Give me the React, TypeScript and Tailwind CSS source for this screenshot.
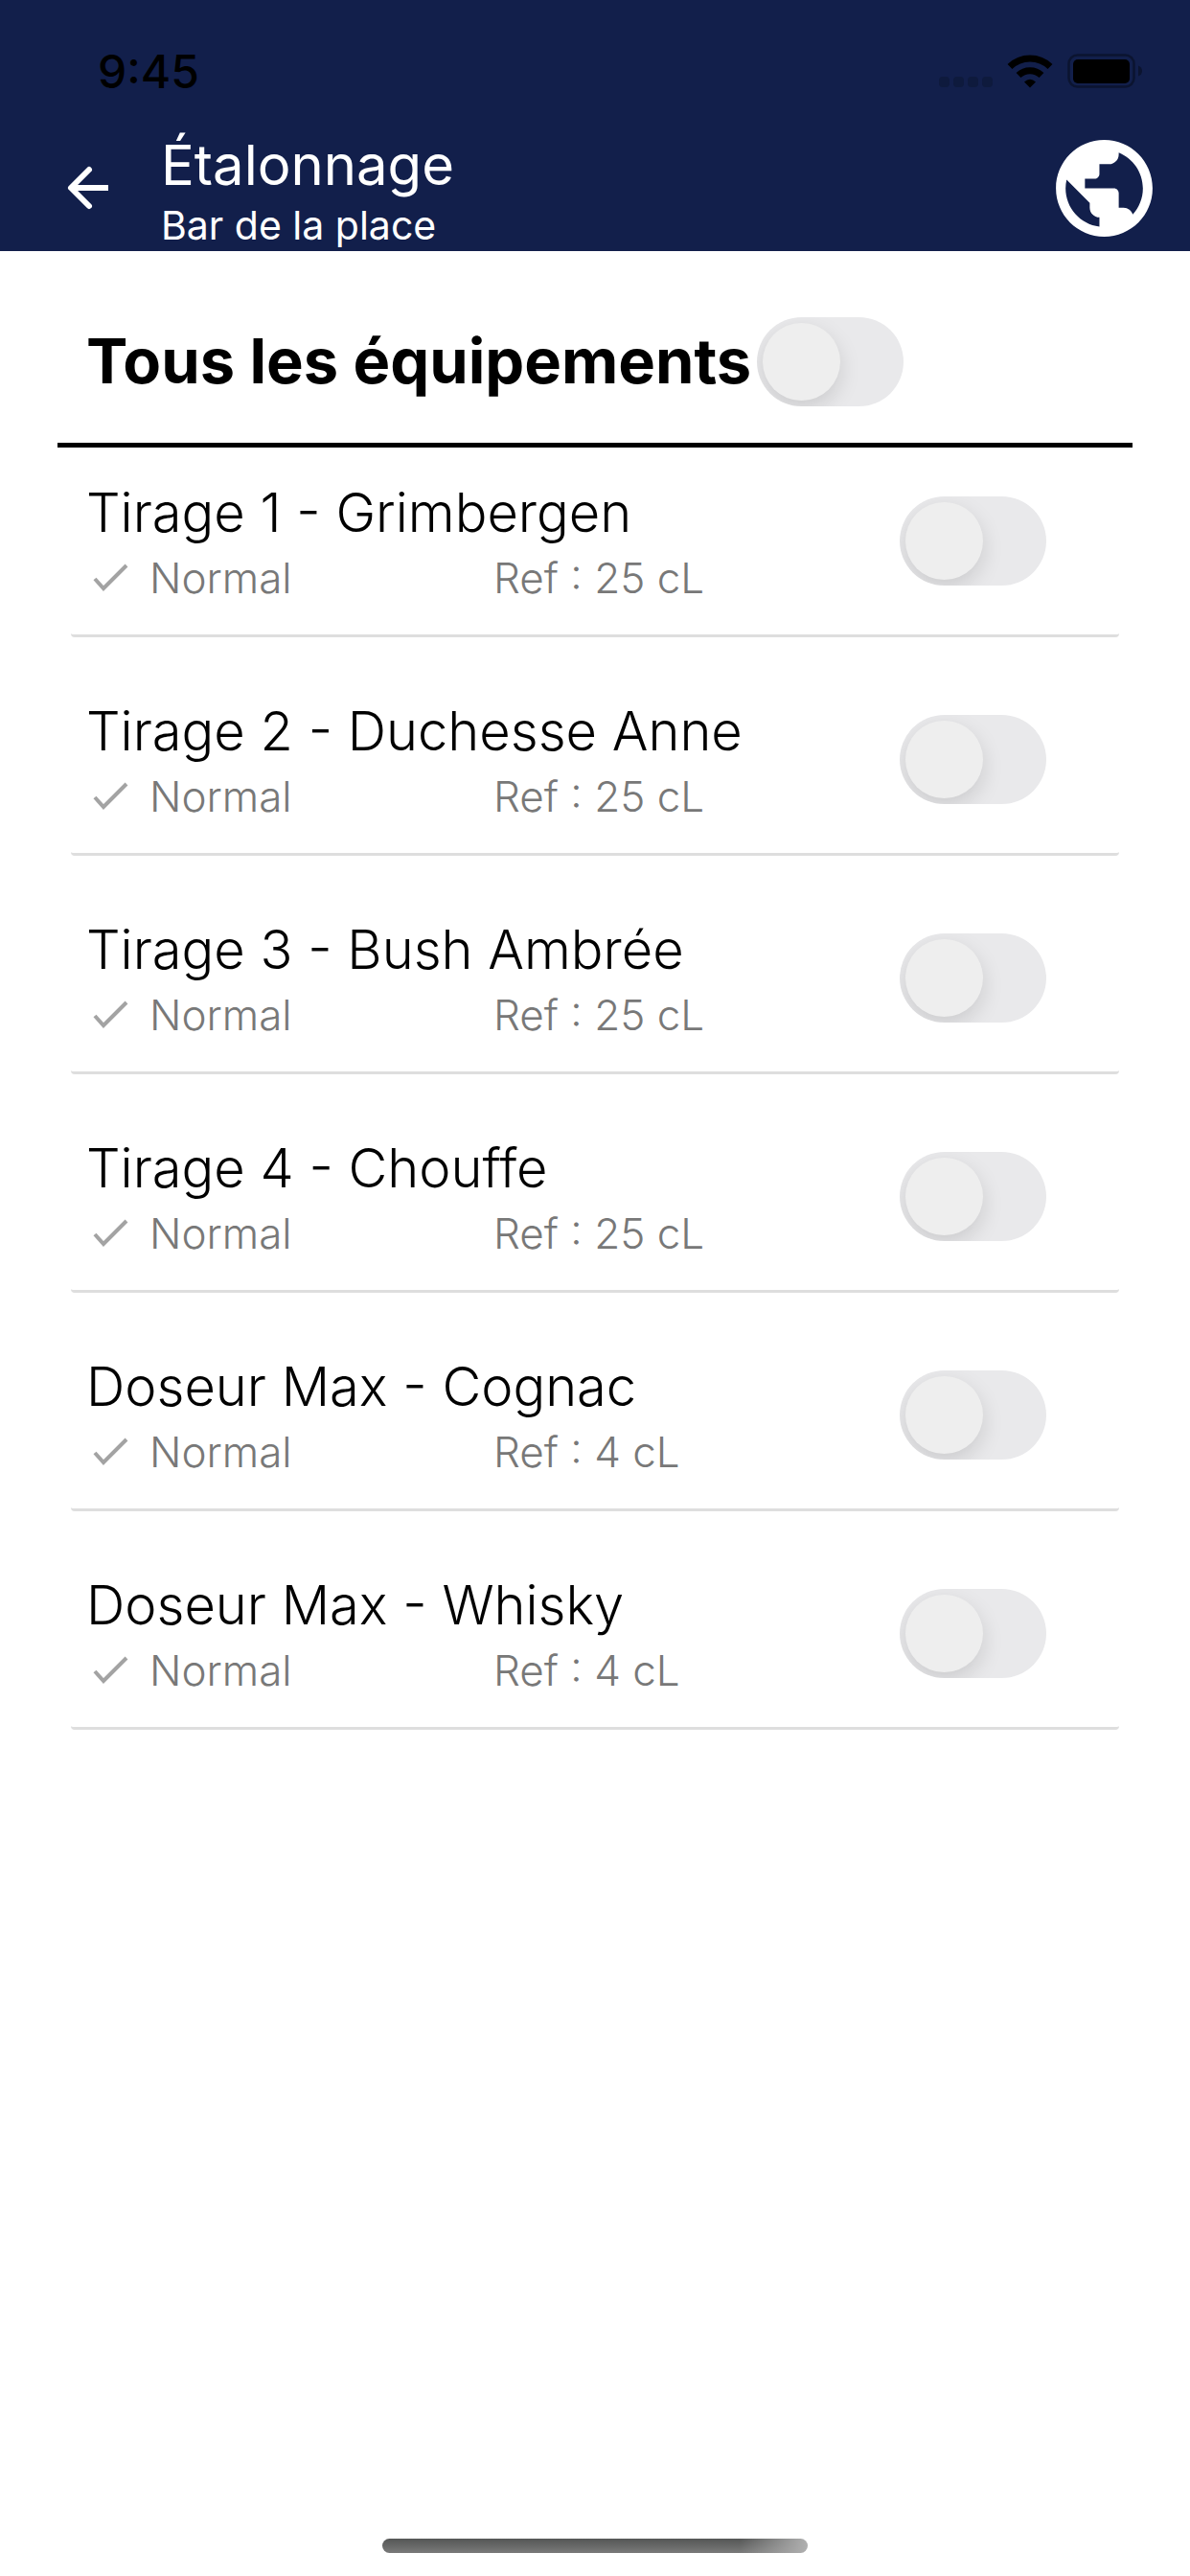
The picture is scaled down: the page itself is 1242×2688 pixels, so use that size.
import { MdPublic } from "react-icons/md";

const equipment = [
  { id: "t1", name: "Tirage 1 - Grimbergen", state: "Normal", dose: "25 cL" },
  { id: "t2", name: "Tirage 2 - Duchesse Anne", state: "Normal", dose: "25 cL" },
  { id: "t3", name: "Tirage 3 - Bush Ambrée", state: "Normal", dose: "25 cL" },
  { id: "t4", name: "Tirage 4 - Chouffe", state: "Normal", dose: "25 cL" },
  { id: "d1", name: "Doseur Max - Cognac", state: "Normal", dose: "4 cL" },
  { id: "d2", name: "Doseur Max - Whisky", state: "Normal", dose: "4 cL" },
];

function Toggle({ id }: { id: string }) {
  return (
    <input
      id={id}
      type="checkbox"
      role="switch"
      className="flex h-[93px] w-[153px] shrink-0 cursor-pointer appearance-none items-center overflow-hidden rounded-full bg-[#e9e9eb] px-1.5 before:block before:size-[81px] before:rounded-full before:bg-[#eeeeee] before:shadow-[0_8px_22px_rgba(0,0,0,0.13)] before:content-[''] checked:justify-end checked:bg-green-500"
    />
  );
}

function StatusBar() {
  return (
    <div className="flex h-[136px] items-start justify-between pt-[52px] pr-[48px] pl-[102px]">
      <span className="text-[48px] leading-[46px] font-medium text-black">9:45</span>
      <div className="flex items-end gap-[15px] pt-1">
        <div className="flex gap-1 pb-px">
          {[0, 1, 2, 3].map((dot) => (
            <span key={dot} className="size-[11px] rounded bg-[#0e1a3d]" />
          ))}
        </div>
        <svg viewBox="0 0 48 36" className="h-9 w-12" fill="none" stroke="#000" strokeWidth="7" aria-label="Wi-Fi">
          <path d="M3 13.500A30 30 0 0 1 45 13.500" />
          <path d="M12 22.500A17.500 17.500 0 0 1 36 22.500" />
          <path d="M18 29.500Q24 24 30 29.500L24 35.500Z" fill="#000" stroke="none" />
        </svg>
        <svg viewBox="0 0 80 36" className="h-9 w-20" aria-label="Batterie">
          <rect x="1.500" y="1.500" width="68" height="33" rx="9" fill="none" stroke="#0b1430" strokeWidth="2.500" />
          <rect x="6" y="6" width="59" height="25" rx="5" fill="#000" />
          <path d="M74 12.500Q78 14 78 18T74 23.500Z" fill="#0b1430" />
        </svg>
      </div>
    </div>
  );
}

export default function App() {
  return (
    <div className="flex min-h-screen flex-col bg-white font-['Inter',sans-serif] text-black">
      <header className="bg-[#121f4b] text-white">
        <StatusBar />
        <div className="flex items-start justify-between pr-[29px] pl-[62px]">
          <div className="flex">
            <button type="button" aria-label="Retour" className="mt-[30px] mr-[46px] size-[60px]">
              <svg viewBox="0 0 60 60" fill="none" stroke="currentColor" strokeWidth="6">
                <path d="M51 30H14" />
                <path d="M31 11L12 30L31 49" strokeLinecap="round" strokeLinejoin="round" />
              </svg>
            </button>
            <div>
              <h1 className="text-[58px] leading-[72px]">Étalonnage</h1>
              <p className="text-[41px] leading-[54px]">Bar de la place</p>
            </div>
          </div>
          <button type="button" aria-label="Langue">
            <MdPublic className="size-[121px]" />
          </button>
        </div>
      </header>

      <main className="flex-1 px-[60px]">
        <div className="flex h-[205px] items-center gap-1.5 border-b-[5px] border-black pt-[30px] pl-[30px]">
          <label htmlFor="all" className="text-[65px] leading-[80px] font-bold">
            Tous les équipements
          </label>
          <Toggle id="all" />
        </div>

        <ul className="flex flex-col gap-[30px] px-[14px]">
          {equipment.map((item) => (
            <li
              key={item.id}
              className="flex h-[198px] items-center justify-between rounded-b-sm border-b-3 border-[#dedede] pr-[76px] pl-4"
            >
              <div className="pt-1">
                <label htmlFor={item.id} className="block text-[56px] leading-[72px] font-light">
                  {item.name}
                </label>
                <div className="flex text-[44px] leading-[64px] font-light text-[#787878]">
                  <span className="flex w-[425px] items-center">
                    <svg viewBox="0 0 40 32" className="mr-5 ml-1.5 h-8 w-10" fill="none" stroke="#a3a3a3" strokeWidth="4">
                      <path d="M3 17L12 27L36 3" />
                    </svg>
                    {item.state}
                  </span>
                  <span>Ref : {item.dose}</span>
                </div>
              </div>
              <Toggle id={item.id} />
            </li>
          ))}
        </ul>
      </main>

      <footer className="flex justify-center pb-6">
        <div className="h-[15px] w-[444px] rounded-full bg-[linear-gradient(to_right,transparent_84%,#b0b0b0),linear-gradient(#545655,#7a7a7a)]" />
      </footer>
    </div>
  );
}
